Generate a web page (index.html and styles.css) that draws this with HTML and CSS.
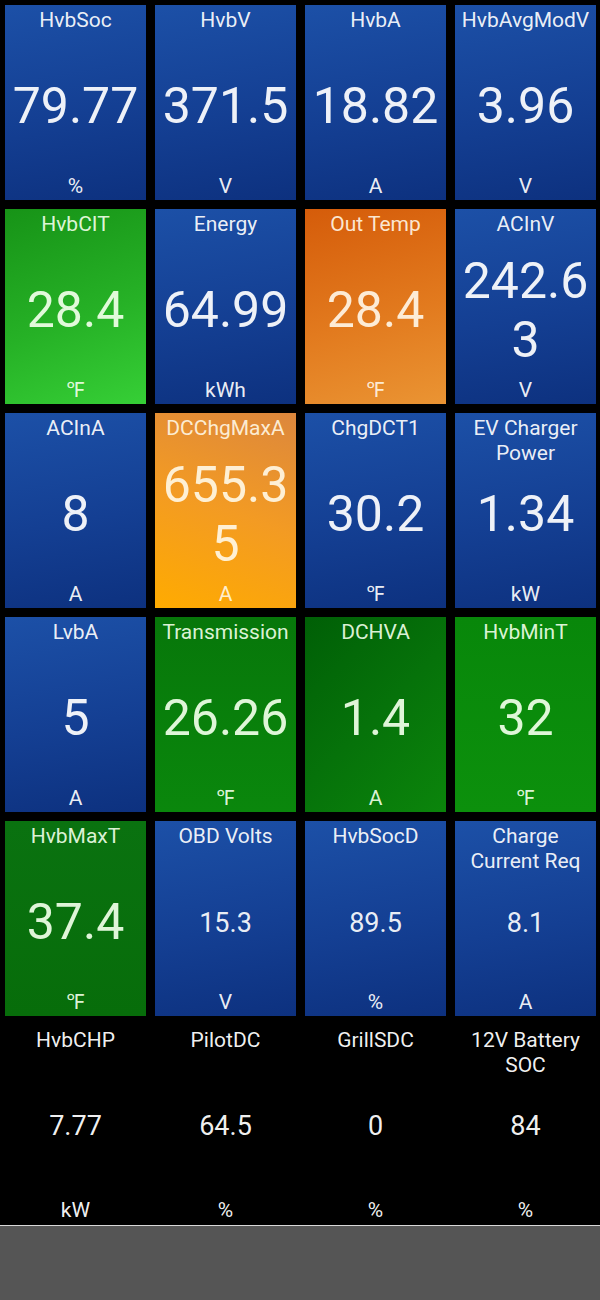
FILE: index.html
```html
<!DOCTYPE html>
<html>
<head>
<meta charset="utf-8">
<link rel="stylesheet" href="styles.css">
</head>
<body>
<div class="dash">
  <div class="grid">
    <div class="tile blue"><div class="t">HvbSoc</div><div class="v">79.77</div><div class="u">%</div></div>
    <div class="tile blue"><div class="t">HvbV</div><div class="v">371.5</div><div class="u">V</div></div>
    <div class="tile blue"><div class="t">HvbA</div><div class="v">18.82</div><div class="u">A</div></div>
    <div class="tile blue"><div class="t">HvbAvgModV</div><div class="v">3.96</div><div class="u">V</div></div>

    <div class="tile lime"><div class="t">HvbCIT</div><div class="v">28.4</div><div class="u">℉</div></div>
    <div class="tile blue"><div class="t">Energy</div><div class="v">64.99</div><div class="u">kWh</div></div>
    <div class="tile orange"><div class="t">Out Temp</div><div class="v">28.4</div><div class="u">℉</div></div>
    <div class="tile blue"><div class="t">ACInV</div><div class="v">242.63</div><div class="u">V</div></div>

    <div class="tile blue"><div class="t">ACInA</div><div class="v">8</div><div class="u">A</div></div>
    <div class="tile amber"><div class="t">DCChgMaxA</div><div class="v">655.35</div><div class="u">A</div></div>
    <div class="tile blue"><div class="t">ChgDCT1</div><div class="v">30.2</div><div class="u">℉</div></div>
    <div class="tile blue"><div class="t">EV Charger Power</div><div class="v">1.34</div><div class="u">kW</div></div>

    <div class="tile blue"><div class="t">LvbA</div><div class="v">5</div><div class="u">A</div></div>
    <div class="tile green"><div class="t">Transmission</div><div class="v">26.26</div><div class="u">℉</div></div>
    <div class="tile dkgreen"><div class="t">DCHVA</div><div class="v">1.4</div><div class="u">A</div></div>
    <div class="tile mdgreen"><div class="t">HvbMinT</div><div class="v">32</div><div class="u">℉</div></div>

    <div class="tile maxgreen"><div class="t">HvbMaxT</div><div class="v">37.4</div><div class="u">℉</div></div>
    <div class="tile blue"><div class="t">OBD Volts</div><div class="v sm">15.3</div><div class="u">V</div></div>
    <div class="tile blue"><div class="t">HvbSocD</div><div class="v sm">89.5</div><div class="u">%</div></div>
    <div class="tile blue"><div class="t">Charge Current Req</div><div class="v sm">8.1</div><div class="u">A</div></div>

    <div class="tile black"><div class="t">HvbCHP</div><div class="v sm">7.77</div><div class="u">kW</div></div>
    <div class="tile black"><div class="t">PilotDC</div><div class="v sm">64.5</div><div class="u">%</div></div>
    <div class="tile black"><div class="t">GrillSDC</div><div class="v sm">0</div><div class="u">%</div></div>
    <div class="tile black"><div class="t">12V Battery SOC</div><div class="v sm">84</div><div class="u">%</div></div>
  </div>
</div>
<div class="footer"></div>
</body>
</html>
```

FILE: styles.css
```css
html, body {
  margin: 0;
  padding: 0;
  background: #000;
}
body {
  font-family: Roboto, "Noto Sans", "Liberation Sans", sans-serif;
  width: 600px;
  height: 1300px;
  overflow: hidden;
}
.dash {
  height: 1226px;
  overflow: hidden;
  border-bottom: 1px solid #d8d8d8;
  box-sizing: border-box;
  background: #000;
}
.grid {
  display: grid;
  grid-template-columns: repeat(4, 141px);
  grid-template-rows: repeat(5, 195px) 199px;
  column-gap: 9px;
  row-gap: 9px;
  padding: 5px 4px 0 5px;
}
.tile {
  display: grid;
  grid-template-rows: 1fr auto 1fr;
  padding: 3px 0 1px 0;
  box-sizing: border-box;
  text-align: center;
  color: rgba(255, 255, 255, 0.93);
  overflow: hidden;
}
.t {
  align-self: start;
  font-size: 21px;
  line-height: 25px;
  padding: 0 2px;
}
.u {
  align-self: end;
  font-size: 21px;
  line-height: 25px;
}
.v {
  font-size: 50px;
  line-height: 59px;
  word-break: break-all;
  padding-top: 6px;
}
.v.sm {
  font-size: 27px;
  line-height: 32px;
}
.black .v.sm {
  padding-top: 0;
}
.blue {
  background: linear-gradient(170deg, #1c50a7 0%, #143f93 55%, #0d317f 100%);
}
.lime {
  background: linear-gradient(160deg, #179317 0%, #26b126 55%, #36cf36 100%);
  color: rgba(240, 255, 232, 0.93);
}
.orange {
  background: linear-gradient(165deg, #d55c0a 0%, #e27a1e 55%, #ea9433 100%);
  color: rgba(255, 244, 228, 0.93);
}
.amber {
  background: linear-gradient(200deg, #dc873d 0%, #f39b23 50%, #ffab00 100%);
  color: rgba(255, 246, 226, 0.93);
}
.green {
  background: linear-gradient(180deg, #07770a 0%, #0a870c 100%);
  color: rgba(240, 255, 232, 0.93);
}
.dkgreen {
  background: linear-gradient(135deg, #005f06 0%, #06720a 50%, #0b850b 100%);
  color: rgba(240, 255, 232, 0.93);
}
.mdgreen {
  background: linear-gradient(180deg, #08870a 0%, #0c900c 100%);
  color: rgba(240, 255, 232, 0.93);
}
.maxgreen {
  background: linear-gradient(180deg, #0a7210 0%, #076d0a 100%);
  color: rgba(240, 255, 232, 0.93);
}
.black {
  background: #000;
  color: rgba(255, 255, 255, 0.95);
}
.footer {
  height: 74px;
  background: #555555;
}
```
